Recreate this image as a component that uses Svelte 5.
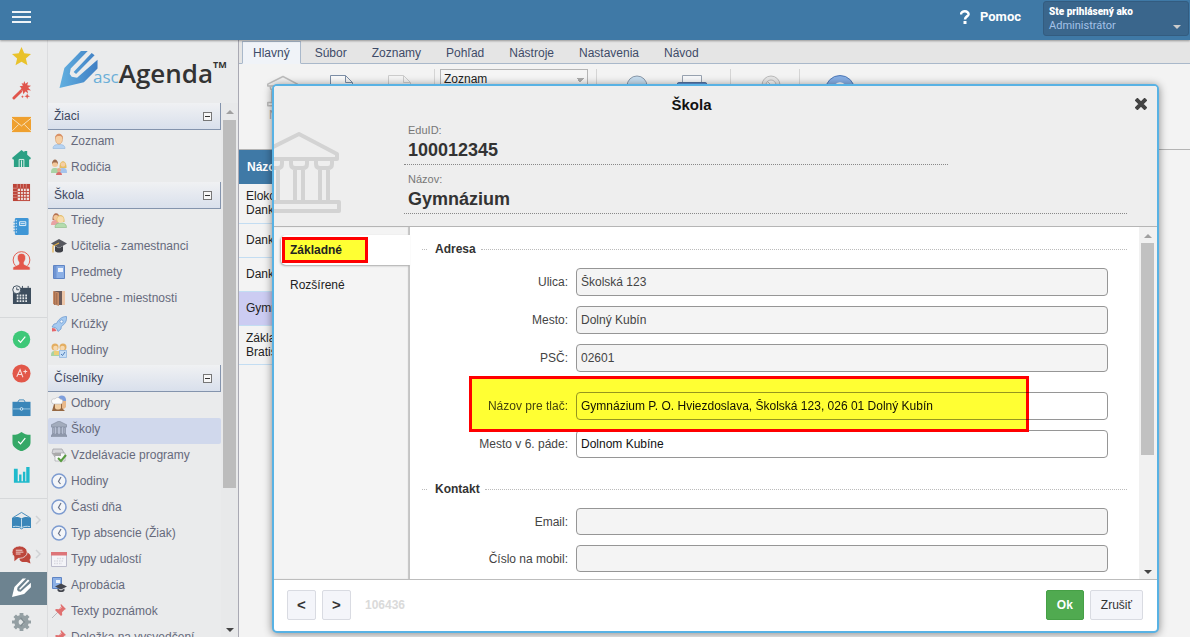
<script>
  const penShape = 'M0 39L5 18.500 22 1h7L11.500 19l-1 5.500 2 3 5.500 1L39 10v9L25 33zM14.500 22.500L33 3l3 2.500L17 24.500z'

  const railIcons = {
    star: '<path fill="#e9c22b" d="M10 0l2.900 6.700 7.100.600-5.400 4.800 1.700 7.200L10 15.500 3.700 19.300l1.700-7.200L0 7.300l7.100-.600z"/>',
    wand: '<path stroke="#e0554c" stroke-width="3" stroke-linecap="round" d="M2 18l7-7"/><path fill="#e0554c" d="M13 0l1 3 3-2-1 3.500 4 .5-3 2 3 3-4-.5 1 3.500-3-2-2 3-1-4-3 .5 2-3-2-2 3.500-.5L10 2l2 1zM16 13l.8 2.200 2.200.8-2.200.8L16 19l-.8-2.200L13 16l2.200-.8zM11 15l.5 1 1 .5-1 .5-.5 1-.5-1-1-.5 1-.5z"/>',
    mail: '<path fill="#efa02f" d="M0 2h20v16H0z"/><path fill="none" stroke="#f8e3c0" d="M0 3.500l10 8 10-8M0 17l7-7M20 17l-7-7"/>',
    home: '<path fill="#2ba084" d="M10 1l3 2.500V2h3v4l4 3.500-1 1.500h-1v8H2v-8H1L0 9.500z"/><path fill="none" stroke="#e4f2ee" d="M7.500 19v-8h5v8M10 12v7"/>',
    grid: '<path fill="#bc4438" d="M1 1h18v18H1z"/><path fill="#f0e4e2" d="M6 6h12v12H6z"/><path stroke="#bc4438" d="M9 6v12M12 6v12M15 6v12M6 9h12M6 12h12M6 15h12"/><path stroke="#e0aaa5" stroke-width=".7" d="M5.500 1v4M9 1v4M12 1v4M15 1v4M1 5.500h4M1 9h4M1 12h4M1 15h4"/>',
    book: '<rect x="3" y="1" width="14.500" height="18" rx="1.500" fill="#3f96d6"/><path fill="none" stroke="#e6f1fa" d="M8 5h6.500v4H8zM9 7h4.500"/><path stroke="#e6f1fa" stroke-dasharray="1.500 1.500" d="M4.500 3v14"/><path stroke="#3f96d6" d="M1.500 5.500h3M1.500 8.500h3M1.500 11.500h3M1.500 14.500h3"/>',
    person: '<circle cx="10" cy="9.500" r="8.800" fill="none" stroke="#e3574b"/><path fill="#e3574b" stroke="#eaebec" stroke-width=".6" d="M10 2.500c3.500 0 4.500 2.500 4.200 5.500-.2 2-1 3-1.600 3.600V14l6.400 3v3H1v-3l6.400-3v-2.400C6.800 11 6 10 5.800 8c-.3-3 .7-5.500 4.200-5.500z"/>',
    calendar: '<path fill="#3e4e5e" d="M2 3h18v17H1V3z"/><path stroke="#e5e8ea" stroke-dasharray="1.800 1.200" stroke-width="2" d="M5 11h12M5 14h12M5 17h12"/><circle cx="5" cy="5" r="4.200" fill="#eaecee" stroke="#3e4e5e"/><path fill="none" stroke="#3e4e5e" d="M5 2.500V5h2.500M11 1v3M17 1v3"/>',
    check: '<circle cx="10" cy="10" r="9.200" fill="#3ec878"/><path fill="none" stroke="#fff" stroke-width="1.300" d="M6.500 10.500l2.500 2.500 5-6"/>',
    grade: '<circle cx="10" cy="10" r="9.500" fill="#e25749"/><path fill="none" stroke="#f9dedb" stroke-width="1.100" d="M5 13.500L8.500 6l3 8M6.500 11h4M12 8h4M14 6v4"/>',
    work: '<path fill="none" stroke="#3f87b8" d="M6 4.500L7.500 2h5L14 4.500"/><path fill="#3a86b9" d="M.5 4h19v15H.5z"/><path stroke="#9cc7e2" d="M1 11.500h7.500M11.500 11.500H19"/><circle cx="10" cy="11.500" r="1.400" fill="none" stroke="#d9ebf5"/>',
    shield: '<path fill="#35a867" d="M10 0c3 2 5 3 9.500 3v8c0 5-4.500 7-9.500 9.500C5 18 .5 16 .5 11V3C5 3 7 2 10 0z"/><path fill="none" stroke="#fff" stroke-width="1.300" d="M6.500 10l2.500 2.500 5-6"/>',
    bars: '<path fill="#1fbacc" d="M2 3h4v14.500H2zM7.500 9h2.500v8.500H7.500zM11.500 6h2.500v11.500h-2.500zM15 1h3.500v16.500H15zM2 16h16.500v1.500H2z"/>',
    library: '<path fill="none" stroke="#3f87b8" d="M1 7l9-5.500L19 7"/><path fill="#3a86b9" d="M0 7c4-1 7-1 10 1 3-2 6-2 10-1v11H12l-2 1.500L8 18H0z"/><path fill="none" stroke="#c7dfed" d="M10 8v10.500M1 16.500c4-1 7 0 9 1 2-1 5-2 9-1"/>',
    chat: '<path fill="#bd463c" d="M11 18c-3-1-4-3-2-5 4 0 7-2 7-5 3 1 5 4.500 2.500 7.500l1 4-4-1.500z"/><ellipse cx="8" cy="7.500" rx="8" ry="6.500" fill="#bd463c" stroke="#eaebec" stroke-width=".8"/><path fill="#bd463c" d="M2.500 11v6l5-4z"/><path stroke="#f2dad8" d="M4 5.500h7M4 7.500h8M4 9.500h5"/>',
    pencil: `<path transform="scale(.51)" fill="#fff" d="${penShape}"/>`,
    gear: '<path fill="#949fa3" d="M8 1h4v2.500l2 .8 1.800-1.800 2.700 2.700L16.700 7l.8 2H20v3h-2.500l-.8 2 1.800 1.800-2.700 2.700-1.800-1.800-2 .8V20H8v-2.500l-2-.8-1.800 1.800-2.700-2.700L3.300 14l-.8-2H0V9h2.500l.8-2-1.800-1.800 2.700-2.700L6 4.300l2-.8z"/><circle cx="10" cy="10.500" r="3" fill="#e3e6e7"/><path fill="none" stroke="#7f8b90" stroke-width="1.500" d="M9 6l4 4.500L9 15"/>',
  }

  const rail = [
    ['star', 'wand', 'mail', 'home', 'grid', 'book', 'person', 'calendar'],
    ['check', 'grade', 'work', 'shield', 'bars'],
    ['library', 'chat', 'pencil', 'gear'],
  ]
  const railArrows = ['library', 'chat']

  const clock = '<circle cx="8" cy="8" r="7" fill="#f3f5f8" stroke="#7d9bd0" stroke-width="1.500"/><path fill="none" stroke="#6a7388" stroke-width="1.200" d="M10 4L7.500 8.500 9.500 11"/>'
  const pin = '<path stroke="#b9b9bd" d="M1 15l6-6"/><path fill="#e07070" d="M10 1l5 5-1.500.7-2.500 2.500.2 2.800-1.200 1L4 7l1-1 3 .2L10.300 3.500 9.500 2z"/><path stroke="#f0a0a0" d="M9 6l2-2"/>'
  const menuIcons = {
    student: '<path fill="#b6d3f2" stroke="#8eb4dc" stroke-width=".6" d="M2 15.500c0-3.500 3-4 6-4s6 .5 6 4z"/><path fill="#f6cfa4" stroke="#d9a070" stroke-width=".7" d="M4.500 5c0-5 7-5 7 0 .2 4-1.500 6-3.500 6S4.300 9 4.500 5z"/><path fill="#d99268" d="M4 6c-.5-7 8.500-7 8 0-1-3-2-3-4-3s-3 0-4 3z"/>',
    parents: '<path fill="#a8d3a4" d="M0 14c0-4 1-5 4-5s4 1 4 5z"/><path fill="#a6c4ec" d="M8 14c0-4 1-5 4-5s4 1 4 5z"/><circle cx="4" cy="5" r="3" fill="#f3c79a"/><path fill="#9b6a4c" d="M1 5c0-6 6-6 6 0L5.500 3.500h-3z"/><path fill="#e5bd62" d="M8.500 9C8 0 16 0 15.500 9z"/><circle cx="12" cy="5.500" r="2.300" fill="#f6cfa4"/><circle cx="8" cy="11" r="2" fill="#e9a98a"/><path fill="#d96c6c" d="M5 16c0-4 6-4 6 0z"/>',
    classes: '<path fill="#e8a3a3" d="M0 13c0-4 2-5 5-5s3 3 3 5z"/><path fill="#b67352" d="M1.500 8c-.5-9 8-9 7 0z"/><circle cx="5" cy="5.500" r="2.600" fill="#f3c79a"/><path fill="#b4dcae" stroke="#86b981" stroke-width=".6" d="M4 15.500c0-4 3-4.500 6-4.500s5.500 1 5.500 4.500z"/><path fill="#e5c06f" d="M5.500 10c-1-9.500 9-9.500 8 0z"/><circle cx="9.500" cy="7.500" r="3.200" fill="#f8dcae"/>',
    teacher: '<path fill="#55575e" d="M8 1l8 4.500-8 4.500-8-4.500z"/><path fill="#3f4148" d="M4 8v5c2 2 6 2 8 0V8l-4 2.300z"/><path fill="none" stroke="#e3b04b" stroke-width="1.200" d="M8 5L2 8v6.500"/>',
    subject: '<path fill="#8cb0e6" stroke="#5f84c4" d="M2.500 1.500h11v13h-11z"/><path fill="#6f94d2" d="M3 2h2.500v12H3z"/><path fill="#eef3fc" d="M7 4h5v4H7z"/>',
    room: '<path fill="#6b5a5a" d="M3 1h11v14H3z"/><path fill="#c88d68" d="M2 1l6 1.500V16l-6-2z"/><path fill="#edc6a8" d="M11 1h3v14h-3z"/><path stroke="#9b6448" d="M3.800 2v12M5.800 3v11.500"/>',
    rocket: '<path fill="#a6caf0" stroke="#6f9bd0" stroke-width=".8" d="M15.500.5c-5 0-8 3-10 7L3 8l-2 3 3 .500L6 13l1 2.500 3-2.500.3-2.500C14 8 16 5 15.500.5z"/><circle cx="10.500" cy="5.500" r="1.600" fill="#f4f8fd" stroke="#6f9bd0" stroke-width=".8"/><path fill="#e5656a" d="M1 12l3 .5L5.500 15 1 15.500z"/>',
    lessons: '<path fill="#a8d3a4" d="M0 14c0-4 1-5 4-5s4 1 4 5z"/><circle cx="4" cy="5" r="3.500" fill="#e3ae62"/><circle cx="12" cy="5" r="3.500" fill="#e3ae62"/><circle cx="4.500" cy="6" r="2.300" fill="#f6d9b0"/><circle cx="11.500" cy="6" r="2.300" fill="#f6d9b0"/><path fill="#eccf78" d="M3 9h5v4H3z"/><path fill="#c6def6" stroke="#85afde" stroke-width=".7" d="M8.500 8.500h7v7h-7z"/><path fill="none" stroke="#4d7cb8" d="M10 12l1.500 1.500L14 10"/>',
    field: '<path fill="#7e9fdc" d="M7 5c-1-6 9-6 8 1v3H9z"/><path fill="#e9b98a" d="M9 6h6v6c-2 3-5 2-6 0z"/><path fill="#966842" d="M3 9h8v4l3 3H1z"/><path fill="#f2cfa3" d="M4 9h6v4c-1 2-5 2-6 0z"/><path fill="#fbfbfb" stroke="#b5b5b8" stroke-width=".6" d="M2 9C-1 6 1 3 4 4c2-3 5-1 5 0 4 0 3 4 1 5z"/>',
    bank: '<path fill="#a3acbd" stroke="#7d879b" stroke-width=".6" d="M8 0l8 4v2H0V4zM1.500 6.500h2v6h-2zM5 6.500h2v6H5zM9 6.500h2v6H9zM12.500 6.500h2v6h-2zM1 13h14v1H1zM0 14.500h16V16H0z"/>',
    programs: '<path fill="#d5d5d8" stroke="#9c9ca3" stroke-width=".7" d="M2 2h9l2 4v3l-9 1-3-4z"/><path fill="#f7f7f8" stroke="#9c9ca3" stroke-width=".6" d="M4 6h10v8H4z"/><path fill="#aaa" d="M1 6h9v3H4z"/><path fill="none" stroke="#579b3f" stroke-width="2" d="M7 11l3 3 5-6"/>',
    clock,
    event: '<path fill="#f4f4f8" stroke="#bcbccc" d="M.5 1.500h15v14H.5z"/><path fill="#dd7478" d="M0 1h16v3.500H0z"/><path stroke="#d9d9e0" stroke-width="1.500" stroke-dasharray="1.500 1" d="M6 7.500h7M3 10h10M3 12.500h8"/>',
    approbation: '<path fill="#8cb0e6" stroke="#5f84c4" d="M1.500.5h9v11h-9z"/><path fill="#edf3fc" d="M5 3h4v3H5z"/><path fill="#44464e" d="M10 6.500l6 3-6 3-6-3zM6.500 11.500v2c1 2 6 2 7 0v-2l-3.500 2z"/>',
    pin,
  }

  const groups = [
    { title: 'Žiaci', items: [['student', 'Zoznam'], ['parents', 'Rodičia']] },
    {
      title: 'Škola',
      items: [
        ['classes', 'Triedy'],
        ['teacher', 'Učitelia - zamestnanci'],
        ['subject', 'Predmety'],
        ['room', 'Učebne - miestnosti'],
        ['rocket', 'Krúžky'],
        ['lessons', 'Hodiny'],
      ],
    },
    {
      title: 'Číselníky',
      items: [
        ['field', 'Odbory'],
        ['bank', 'Školy'],
        ['programs', 'Vzdelávacie programy'],
        ['clock', 'Hodiny'],
        ['clock', 'Časti dňa'],
        ['clock', 'Typ absencie (Žiak)'],
        ['event', 'Typy udalostí'],
        ['approbation', 'Aprobácia'],
        ['pin', 'Texty poznámok'],
        ['pin', 'Doložka na vysvedčení'],
      ],
    },
  ]

  const ribbonTabs = ['Hlavný', 'Súbor', 'Zoznamy', 'Pohľad', 'Nástroje', 'Nastavenia', 'Návod']
  const schools = [
    ['Elokované', 'Danka'],
    ['Danka'],
    ['Danka'],
    ['Gymnázium'],
    ['Základná', 'Bratislava'],
  ]

  let activeRibbon = $state('Hlavný')
  let activeItem = $state('Školy')
  let activeTab = $state('basic')
  let printName = $state('Gymnázium P. O. Hviezdoslava, Školská 123, 026 01 Dolný Kubín')
  let cityCase = $state('Dolnom Kubíne')
</script>

{#snippet bankOutline(cls)}
  <svg class={cls} viewBox="0 0 84 84" aria-hidden="true">
    <g fill="none" stroke="currentColor" stroke-width="4" stroke-linejoin="round">
      <path d="M2 24L42 4l38 20v5H2z" />
      <path d="M9 31v3q0 4 4 4v32M25 31v3q0 4-4 4v32M13 38h8" />
      <path d="M34 31v3q0 4 4 4v32M50 31v3q0 4-4 4v32M38 38h8" />
      <path d="M59 31v3q0 4 4 4v32M75 31v3q0 4-4 4v32M63 38h8" />
      <path d="M2 72h80v9H2z" />
    </g>
  </svg>
{/snippet}

{#snippet field(id, label, value)}
  <div class="field">
    <label for={id}>{label}</label>
    <input {id} type="text" {value} readonly />
  </div>
{/snippet}

<div class="page">
  <header class="topbar">
    <button class="burger" type="button" aria-label="Menu"><span></span><span></span><span></span></button>
    <a class="help" href="#help">
      <svg viewBox="0 0 10 14" width="10" height="14" aria-hidden="true"><path fill="none" stroke="#fff" stroke-width="2.500" d="M1 4.500C1 0 9 .5 8.500 4.500 8.200 6.500 5 6.500 5 9.500" /><path fill="#fff" d="M3.500 11h3v3h-3z" /></svg>
      Pomoc
    </a>
    <button class="user" type="button">
      <b>Ste prihlásený ako</b>
      <span>Administrátor</span>
      <i class="caret"></i>
    </button>
  </header>

  <div class="workspace">
    <nav class="rail">
      {#each rail as section}
        <div class="rail-section">
          {#each section as name}
            <button class="rail-btn" class:active={name === 'pencil'} type="button" aria-label={name}>
              <svg viewBox="0 0 20 20" width="19" height="19" fill="none">{@html railIcons[name]}</svg>
              {#if railArrows.includes(name)}
                <svg class="rail-arrow" viewBox="0 0 6 10" width="6" height="10"><path fill="none" stroke="#d0d2d5" stroke-width="1.500" d="M1 1l4 4-4 4" /></svg>
              {/if}
            </button>
          {/each}
        </div>
      {/each}
    </nav>

    <aside class="sidebar">
      <div class="logo">
        <svg viewBox="0 0 40 40" width="40" height="39" aria-hidden="true">
          <defs>
            <linearGradient id="pen" x1="0" y1="0" x2="1" y2="0"><stop offset="0" stop-color="#62b0e0" /><stop offset="1" stop-color="#407fc4" /></linearGradient>
          </defs>
          <path fill="url(#pen)" d={penShape} />
        </svg>
        <span class="logo-asc">asc</span><span class="logo-name">Agenda</span><span class="logo-tm">TM</span>
      </div>
      <div class="menu-wrap">
        <div class="menu">
          {#each groups as group}
            <button class="group-title" type="button">{group.title}<i class="minus"></i></button>
            {#each group.items as [icon, label]}
              <button class="menu-item" class:active={activeItem === label} onclick={() => (activeItem = label)} type="button">
                <svg viewBox="0 0 16 16" width="16" height="16" fill="none">{@html menuIcons[icon]}</svg>
                {label}
              </button>
            {/each}
          {/each}
        </div>
        <div class="scroll"><i class="up"></i><i class="thumb"></i><i class="down"></i></div>
      </div>
    </aside>

    <main class="main">
      <div class="ribbon-tabs">
        {#each ribbonTabs as tab}
          <button class:active={activeRibbon === tab} onclick={() => (activeRibbon = tab)} type="button">{tab}</button>
        {/each}
      </div>
      <div class="toolbar">
        <button class="tool" type="button">{@render bankOutline('tool-bank')}<span>Nová</span></button>
        <button class="tool" type="button" aria-label="Otvoriť">
          <svg viewBox="0 0 30 30" width="30" height="30"><path fill="#fafafa" stroke="#7c8ea6" d="M4.500.5h15l7 7v22h-22zM19.500.5v7h7" /></svg>
        </button>
        <button class="tool" type="button" aria-label="Zmazať">
          <svg viewBox="0 0 30 30" width="30" height="30"><path fill="#f5f5f5" stroke="#ccc" d="M4.500.5h15l7 7v22h-22zM19.500.5v7h7" /></svg>
        </button>
        <div class="sep sep-list"></div>
        <select aria-label="Zobrazenie"><option>Zoznam</option></select>
        <div class="sep"></div>
        <button class="tool tool-wide" type="button" aria-label="Hľadať">
          <svg viewBox="0 0 30 30" width="30" height="30"><circle cx="15" cy="11" r="10" fill="#c5dcee" stroke="#8898aa" /></svg>
        </button>
        <button class="tool tool-print" type="button" aria-label="Tlačiť">
          <svg viewBox="0 0 30 30" width="30" height="30"><path fill="#f7f8fa" stroke="#98a2b0" d="M5.500.5h19v10h-19z" /><rect y="7.500" width="30" height="16" rx="2" fill="#5d8fd0" stroke="#54719c" /></svg>
        </button>
        <div class="sep"></div>
        <button class="tool tool-wide" type="button" aria-label="Zrušiť filter">
          <svg viewBox="0 0 30 30" width="30" height="30"><circle cx="15" cy="10" r="9" fill="#e6e6e6" stroke="#bbb" /><circle cx="15" cy="10" r="5" fill="#f3f3f3" stroke="#bbb" /><path stroke="#bbb" d="M11 6l8 8" /></svg>
        </button>
        <div class="sep"></div>
        <button class="tool tool-wide" type="button" aria-label="Pomoc">
          <svg viewBox="0 0 30 30" width="30" height="30"><circle cx="15" cy="15" r="14.500" fill="#86aee4" stroke="#4f7ab8" /><path fill="none" stroke="#fff" stroke-width="3" d="M10 14c0-7 10-7 10 0 0 3-5 3-5 7" /></svg>
        </button>
      </div>
      <table class="schools">
        <thead><tr><th>Názov</th></tr></thead>
        <tbody>
          {#each schools as lines}
            <tr class:selected={lines[0] === 'Gymnázium'} class:double={lines.length > 1}>
              <td>{#each lines as line}<div>{line}</div>{/each}</td>
            </tr>
          {/each}
        </tbody>
      </table>
    </main>
  </div>

  <div class="dialog" role="dialog" aria-labelledby="dialog-title">
    <div class="dialog-head">
      <h1 id="dialog-title">Škola</h1>
      <button class="close" type="button" aria-label="Zavrieť">
        <svg viewBox="0 0 12 12" width="12" height="12"><path stroke="#444" stroke-width="4" d="M1 1l10 10M11 1L1 11" /></svg>
      </button>
      <div class="summary">
        <div class="summary-icon">{@render bankOutline('bank-big')}</div>
        <dl>
          <div class="fact short"><dt>EduID:</dt><dd>100012345</dd></div>
          <div class="fact"><dt>Názov:</dt><dd>Gymnázium</dd></div>
        </dl>
      </div>
    </div>

    <div class="dialog-body">
      <div class="side-tabs" role="tablist">
        <button role="tab" class:active={activeTab === 'basic'} aria-selected={activeTab === 'basic'} onclick={() => (activeTab = 'basic')} type="button"><span class="marked">Základné</span></button>
        <button role="tab" class:active={activeTab === 'extended'} aria-selected={activeTab === 'extended'} onclick={() => (activeTab = 'extended')} type="button"><span>Rozšírené</span></button>
      </div>
      <form class="form" onsubmit={(e) => e.preventDefault()}>
        <h2>Adresa</h2>
        {@render field('street', 'Ulica:', 'Školská 123')}
        {@render field('city', 'Mesto:', 'Dolný Kubín')}
        {@render field('zip', 'PSČ:', '02601')}
        <div class="field highlighted">
          <label for="print-name">Názov pre tlač:</label>
          <input id="print-name" type="text" bind:value={printName} />
          <div class="marker"></div>
        </div>
        <div class="field">
          <label for="city-case">Mesto v 6. páde:</label>
          <input id="city-case" type="text" bind:value={cityCase} />
        </div>
        <h2 class="next">Kontakt</h2>
        {@render field('email', 'Email:', '')}
        {@render field('mobile', 'Číslo na mobil:', '')}
      </form>
      <div class="scroll form-scroll"><i class="up"></i><i class="thumb"></i><i class="down"></i></div>
    </div>

    <footer class="dialog-foot">
      <button class="btn nav" type="button" aria-label="Predchádzajúci">&lt;</button>
      <button class="btn nav" type="button" aria-label="Nasledujúci">&gt;</button>
      <span class="record-id">106436</span>
      <button class="btn ok" type="button">Ok</button>
      <button class="btn" type="button">Zrušiť</button>
    </footer>
  </div>
</div>

<style>
  :global(body) { margin: 0; overflow: hidden; }
  .page {
    position: relative; display: flex; flex-direction: column; height: 100vh;
    background: #f3f3f3; font: 12px/16px "Liberation Sans", Arial, sans-serif; color: #333;
  }
  .page * { box-sizing: border-box; }
  button { font: inherit; color: inherit; border: 0; background: none; padding: 0; margin: 0; cursor: pointer; }
  svg { flex-shrink: 0; }

  .topbar {
    display: flex; flex-shrink: 0; height: 40px; padding: 0 1px 0 12px; z-index: 1;
    background: #3f79a6; box-shadow: 0 1px 2px rgba(0,0,0,0.35); color: #fff; font-family: Roboto, sans-serif;
  }
  .burger { display: flex; flex-direction: column; gap: 3px; align-self: flex-start; width: 19px; margin-top: 11px; }
  .burger span { height: 2px; width: 19px; background: #eef3f7; }
  .help { display: flex; align-items: center; gap: 10px; height: 34px; margin-left: auto; margin-right: 22px; color: #fff; font-size: 13px; font-weight: bold; text-decoration: none; }
  .user {
    position: relative; display: flex; flex-direction: column; width: 146px; height: 35px; margin-top: 1px; padding: 3px 5px;
    text-align: left; line-height: 14px; background: #3a668c; border: 1px solid #335c80; border-radius: 3px;
  }
  .user b { font-size: 10px; font-weight: 900; }
  .user span { font-size: 11px; color: #a4c2e8; }
  .caret { position: absolute; right: 7px; bottom: 6px; border: 4px solid transparent; border-top-color: #ccc; border-bottom: 0; }

  .workspace { display: flex; flex: 1; min-height: 0; }
  .rail { width: 48px; flex-shrink: 0; background: #eaebec; border-right: 1px solid #dbdcde; overflow: hidden; }
  .rail-section { padding-bottom: 5px; }
  .rail-section + .rail-section { border-top: 1px solid #d6d8da; padding-top: 5px; }
  .rail-btn { display: flex; align-items: center; gap: 4px; width: 100%; height: 34px; padding: 0 0 2px 12px; }
  .rail-btn.active { width: 48px; height: 33px; background: #6d8390; }

  .sidebar { display: flex; flex-direction: column; width: 191px; flex-shrink: 0; background: #eaebec; border-right: 1px solid #a9a9b3; }
  .logo { display: flex; height: 63px; flex-shrink: 0; padding: 10px 0 0 11px; font-family: "Open Sans", "Noto Sans", sans-serif; }
  .logo span { line-height: 36px; }
  .logo-asc { margin: 9px 0 0 -6px; font-size: 17px; color: #6aafd8; }
  .logo-name { padding-top: 5px; font-size: 26px; font-weight: 600; color: #333; }
  .logo .logo-tm { font-size: 9px; line-height: 12px; font-weight: bold; margin-top: 9px; color: #333; }

  .menu-wrap { display: flex; flex: 1; min-height: 0; }
  .menu { width: 173px; overflow: hidden; color: #666a7c; }
  .group-title {
    display: flex; align-items: center; justify-content: space-between; width: 100%; height: 27px; padding: 0 8px 0 6px;
    color: #3c4660; border-right: 1px solid #8494ad; border-bottom: 1px solid #8494ad; background: linear-gradient(#f0f1f3, #d9e0ec);
  }
  .minus { width: 9px; height: 9px; border: 1px solid #777; background: linear-gradient(#333, #333) center / 5px 1px no-repeat #f7f7f7; }
  .menu-item { display: flex; align-items: center; gap: 4px; width: 100%; height: 26px; padding: 0 0 4px 3px; text-align: left; white-space: nowrap; }
  .menu-item.active { background: #d0d8ec; border-radius: 2px; }

  .scroll { display: flex; flex-direction: column; align-items: center; width: 17px; background: #e8e9ea; }
  .up { margin-top: 7px; border: 4px solid transparent; border-bottom-color: #a0a0a0; border-top: 0; }
  .down { margin: auto 0 5px; border: 4px solid transparent; border-top-color: #444; border-bottom: 0; }
  .thumb { width: 13px; height: 69%; margin-top: 6px; background: #bcbcbc; }

  .main { flex: 1; min-width: 0; background: #f3f3f3; }
  .ribbon-tabs { display: flex; gap: 3px; height: 24px; padding: 1px 0 0 3px; background: #e5e5e5; border-bottom: 1px solid #a9b8ca; }
  .ribbon-tabs button { height: 23px; padding: 0 10px; color: #3e4b68; border: 1px solid transparent; }
  .ribbon-tabs .active { background: #f0f3f8; border-color: #a9b8ca; border-bottom-color: #f0f3f8; }
  .toolbar { display: flex; height: 86px; padding: 5px 0 0 15px; background: #f3f3f3; border-bottom: 1px solid #b4b4b4; }
  .tool { display: flex; flex-direction: column; align-items: center; justify-content: flex-start; width: 58px; padding-top: 6px; color: #aaa; }
  .tool :global(.tool-bank) { width: 32px; height: 32px; color: #bdbdbd; }
  .tool-wide { width: 56px; margin-left: 12px; }
  .tool-print { width: 54px; margin-right: 11px; }
  .sep { width: 1px; height: 70px; background: #d5d5d5; }
  .sep-list { margin: 0 5px 0 6px; }
  .toolbar select {
    appearance: none; width: 148px; height: 20px; margin-right: 8px; padding: 0 3px; border: 1px solid #b5b5b5; border-radius: 0; color: #222;
    font: 12px/18px "Liberation Sans", Arial, sans-serif;
    background: linear-gradient(to top right, transparent 50%, #aaa 0) right 7px top 8px / 4px 4px no-repeat, linear-gradient(to top left, transparent 50%, #aaa 0) right 3px top 8px / 4px 4px no-repeat, #f5f5f5;
  }

  .schools { width: 480px; border-collapse: collapse; line-height: 14px; color: #222; }
  .schools th { height: 34px; padding: 0 8px; text-align: left; color: #fff; background: #3f79a6; }
  .schools td { height: 34px; padding: 0 7px; border-bottom: 1px solid #c3ddf2; }
  .schools .double td { height: 39px; }
  .schools .selected { background: #ccccf2; }

  .dialog {
    position: absolute; inset: 84px 31px 4px 272px; display: flex; flex-direction: column; z-index: 2;
    background: #fff; border: 2px solid #58b2e4; border-radius: 5px; box-shadow: 0 1px 9px rgba(0,0,0,0.45); overflow: hidden;
  }
  .dialog-head { position: relative; flex-shrink: 0; height: 141px; background: #eee; border-bottom: 1px solid #b5b5b5; }
  h1 { margin: 0; padding: 11px 48px 0 0; font-size: 15px; line-height: 16px; text-align: center; color: #111; }
  .close { position: absolute; top: 12px; right: 10px; width: 12px; height: 12px; }
  .close svg { display: block; }
  .summary { display: flex; padding-top: 9px; }
  .summary-icon { width: 130px; overflow: hidden; color: #d3d3d3; padding-top: 8px; }
  .summary-icon :global(.bank-big) { display: block; width: 84px; height: 84px; margin-left: -17px; }
  dl { flex: 1; margin: 0 30px 0 0; }
  .fact { height: 49px; padding: 0 4px; border-bottom: 1px dotted #888; }
  .fact.short { height: 43px; margin-right: 179px; }
  dt { font-size: 11px; line-height: 16px; color: #777; }
  .fact:not(.short) dt { padding-top: 6px; }
  dd { margin: 0; font-size: 18px; font-weight: bold; line-height: 24px; color: #333; }

  .dialog-body { display: flex; flex: 1; min-height: 0; }
  .side-tabs { display: flex; flex-direction: column; gap: 5px; width: 136px; flex-shrink: 0; padding: 8px 0 0 7px; background: #f4f4f4; box-shadow: inset -2px 0 1px #c4c4c4; color: #222; }
  .side-tabs button { height: 30px; text-align: left; }
  .side-tabs .active { font-weight: bold; background: #fff; border-radius: 5px 0 0 5px; box-shadow: -1px 1px 2px #aaa; }
  .side-tabs span { display: block; width: 86px; height: 26px; padding: 0 5px; margin-left: 1px; border: 3px solid transparent; line-height: 20px; }
  .side-tabs .marked { background: #ffff33; border-color: #f00; }

  .form { flex: 1; min-width: 0; padding: 14px 31px 0 12px; overflow: hidden; }
  h2 { display: flex; align-items: center; gap: 8px; margin: 0 -19px 11px 0; font-size: 12px; line-height: 16px; }
  h2::before, h2::after { content: ''; width: 5px; border-top: 1px dotted #bbb; }
  h2::after { flex: 1; margin-left: -3px; }
  h2.next { margin-top: 23px; }
  .field { position: relative; display: flex; align-items: center; gap: 8px; margin-bottom: 10px; }
  .field label { width: 146px; text-align: right; color: #444; }
  .field input {
    flex: 1; min-width: 0; height: 28px; padding: 0 4px; font: inherit; color: #111;
    background: #fff; border: 1px solid #969696; border-radius: 4px; outline: 0;
  }
  .field input:read-only { background: #f4f4f4; color: #444; }
  h2.next ~ .field input { height: 27px; }
  .highlighted { margin-top: 20px; z-index: 1; isolation: isolate; background: #fff; }
  .marker { position: absolute; inset: -16px 79px -12px 47px; border: 3px solid #f00; background: #ffff33; mix-blend-mode: multiply; pointer-events: none; }

  .form-scroll { width: 18px; background: #f1f1f1; padding-right: 1px; }
  .form-scroll .thumb { height: 212px; margin-top: 5px; background: #c1c1c1; }

  .dialog-foot { display: flex; align-items: center; flex-shrink: 0; gap: 6px; height: 52px; padding: 0 14px 2px 13px; border-top: 1px solid #bdbdbd; }
  .btn { height: 30px; padding: 0 10px; color: #333; background: #f4f5fa; border: 1px solid #d9dbe2; border-radius: 2px; }
  .btn.nav { width: 29px; padding: 0; font-size: 15px; font-weight: bold; }
  .btn.ok { color: #fff; font-weight: bold; background: #50aa50; border-color: #46a046; }
  .record-id { margin: 0 auto 0 8px; font-weight: bold; color: #dadada; }
</style>
